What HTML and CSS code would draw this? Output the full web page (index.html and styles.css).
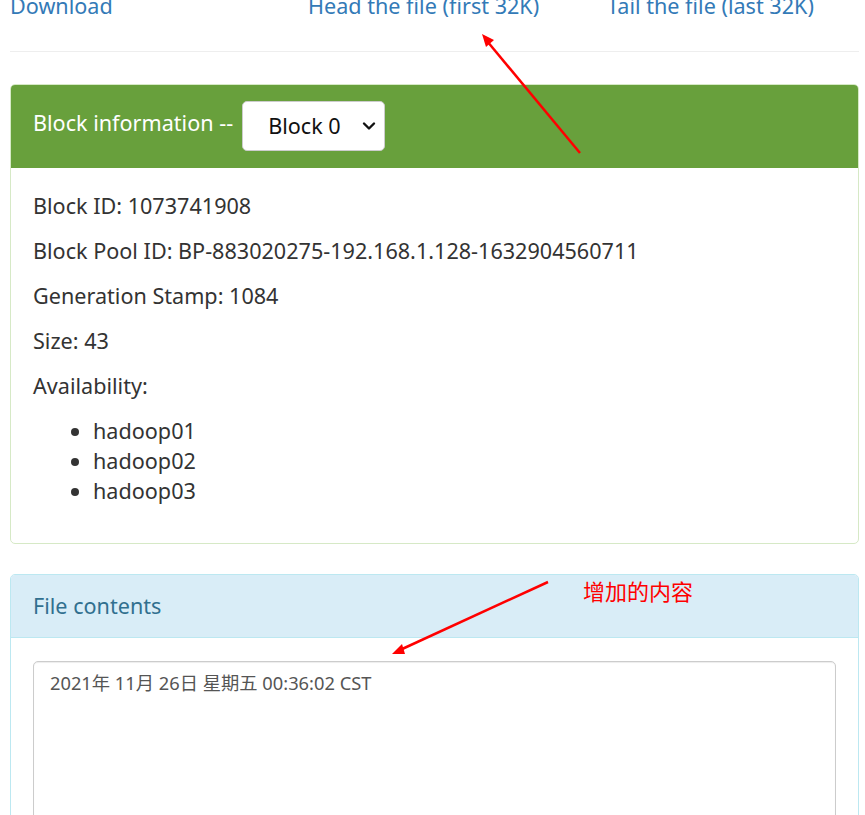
FILE: index.html
```html
<!DOCTYPE html>
<html>
<head>
	<title>Browse Directory - explorer</title>
	<meta charset="utf-8">
	<link rel="stylesheet" href="styles.css">
</head>
<body>

<div class="page">
	<div class="file-links">
		<a href="#">Download</a>
		<a href="#">Head the file (first 32K)</a>
		<a href="#">Tail the file (last 32K)</a>
	</div>
	<hr class="divider">

	<div class="panel panel-success">
		<div class="panel-heading">
			<span class="panel-label">Block information --</span>
			<div class="block-select">
				<span>Block 0</span>
				<svg width="14" height="10" viewBox="0 0 14 10"><path d="M2 2.5 L7 7.5 L12 2.5" fill="none" stroke="#111" stroke-width="2.4" stroke-linecap="round" stroke-linejoin="round"/></svg>
			</div>
		</div>
		<div class="panel-body">
			<p>Block ID: 1073741908</p>
			<p>Block Pool ID: BP-883020275-192.168.1.128-1632904560711</p>
			<p>Generation Stamp: 1084</p>
			<p>Size: 43</p>
			<p>Availability:</p>
			<ul>
				<li>hadoop01</li>
				<li>hadoop02</li>
				<li>hadoop03</li>
			</ul>
		</div>
	</div>

	<div class="panel panel-info">
		<div class="panel-heading">File contents</div>
		<div class="panel-body">
			<textarea class="file-contents" readonly>2021年 11月 26日 星期五 00:36:02 CST</textarea>
		</div>
	</div>

	<!-- red markup drawn on top of the screenshot -->
	<svg class="annotations" width="865" height="815" viewBox="0 0 865 815">
		<line x1="580" y1="162" x2="487" y2="50" stroke="#f00" stroke-width="2.5"/>
		<polygon points="482,43 494,49 486,56" fill="#f00"/>
		<line x1="548" y1="591" x2="400" y2="659" stroke="#f00" stroke-width="2.5"/>
		<polygon points="392,663 402,653 405,663" fill="#f00"/>
	</svg>
	<span class="note">增加的内容</span>
</div>

</body>
</html>
```

FILE: styles.css
```css
html, body {
	margin: 0;
	padding: 0;
	overflow: hidden;
}
body {
	font-family: "Noto Sans", "Noto Sans CJK SC", sans-serif;
	font-size: 21.6px;
	line-height: 30px;
	color: #333;
	background: #fff;
}
.page {
	position: relative;
	margin: 0 6px 0 10px;
}
.file-links {
	display: grid;
	grid-template-columns: 298px 299px 1fr;
	margin-top: -9px;
}
.file-links a {
	color: #337ab7;
	text-decoration: none;
}
.divider {
	margin: 30px 0 32px;
	border: 0;
	border-top: 1px solid #eee;
}
.panel {
	border: 1px solid #ddd;
	border-radius: 5px;
	margin-bottom: 30px;
	background: #fff;
}
.panel-heading {
	padding: 16px 22px;
	border-bottom: 1px solid transparent;
	border-radius: 4px 4px 0 0;
}
.panel-body {
	padding: 23px 22px 22px 22px;
}
.panel-body p {
	margin: 0 0 15px;
}
.panel-body ul {
	margin: 0 0 15px;
	padding-left: 60px;
}

.panel-success {
	border-color: #d6e9c6;
}
.panel-success .panel-heading {
	background: #68a03c;
	border-color: #68a03c;
	color: #fff;
	display: flex;
	align-items: center;
	gap: 9px;
}
.panel-label {
	margin-bottom: 6px;
}
.block-select {
	display: flex;
	align-items: center;
	justify-content: space-between;
	box-sizing: border-box;
	width: 143px;
	height: 50px;
	padding: 0 8px 0 25px;
	background: #fff;
	border: 1px solid #ccc;
	border-radius: 5px;
	color: #111;
}

.panel-info {
	border-color: #bce8f1;
}
.panel-info .panel-heading {
	background: #d9edf7;
	border-color: #bce8f1;
	color: #31708f;
}
.file-contents {
	display: block;
	box-sizing: border-box;
	width: 100%;
	height: 300px;
	margin: 0;
	padding: 7px 16px;
	font-family: "Noto Sans", "Noto Sans CJK SC", sans-serif;
	font-size: 18.3px;
	line-height: 28px;
	color: #555;
	border: 1px solid #ccc;
	border-radius: 5px;
	box-shadow: inset 0 1px 1px rgba(0, 0, 0, .075);
	resize: none;
	outline: none;
}

.annotations {
	position: absolute;
	left: -10px;
	top: 0;
	pointer-events: none;
}
.note {
	position: absolute;
	left: 573px;
	top: 584px;
	font-family: "Noto Sans CJK SC", sans-serif;
	font-size: 22px;
	line-height: 30px;
	color: #f00;
}
```
